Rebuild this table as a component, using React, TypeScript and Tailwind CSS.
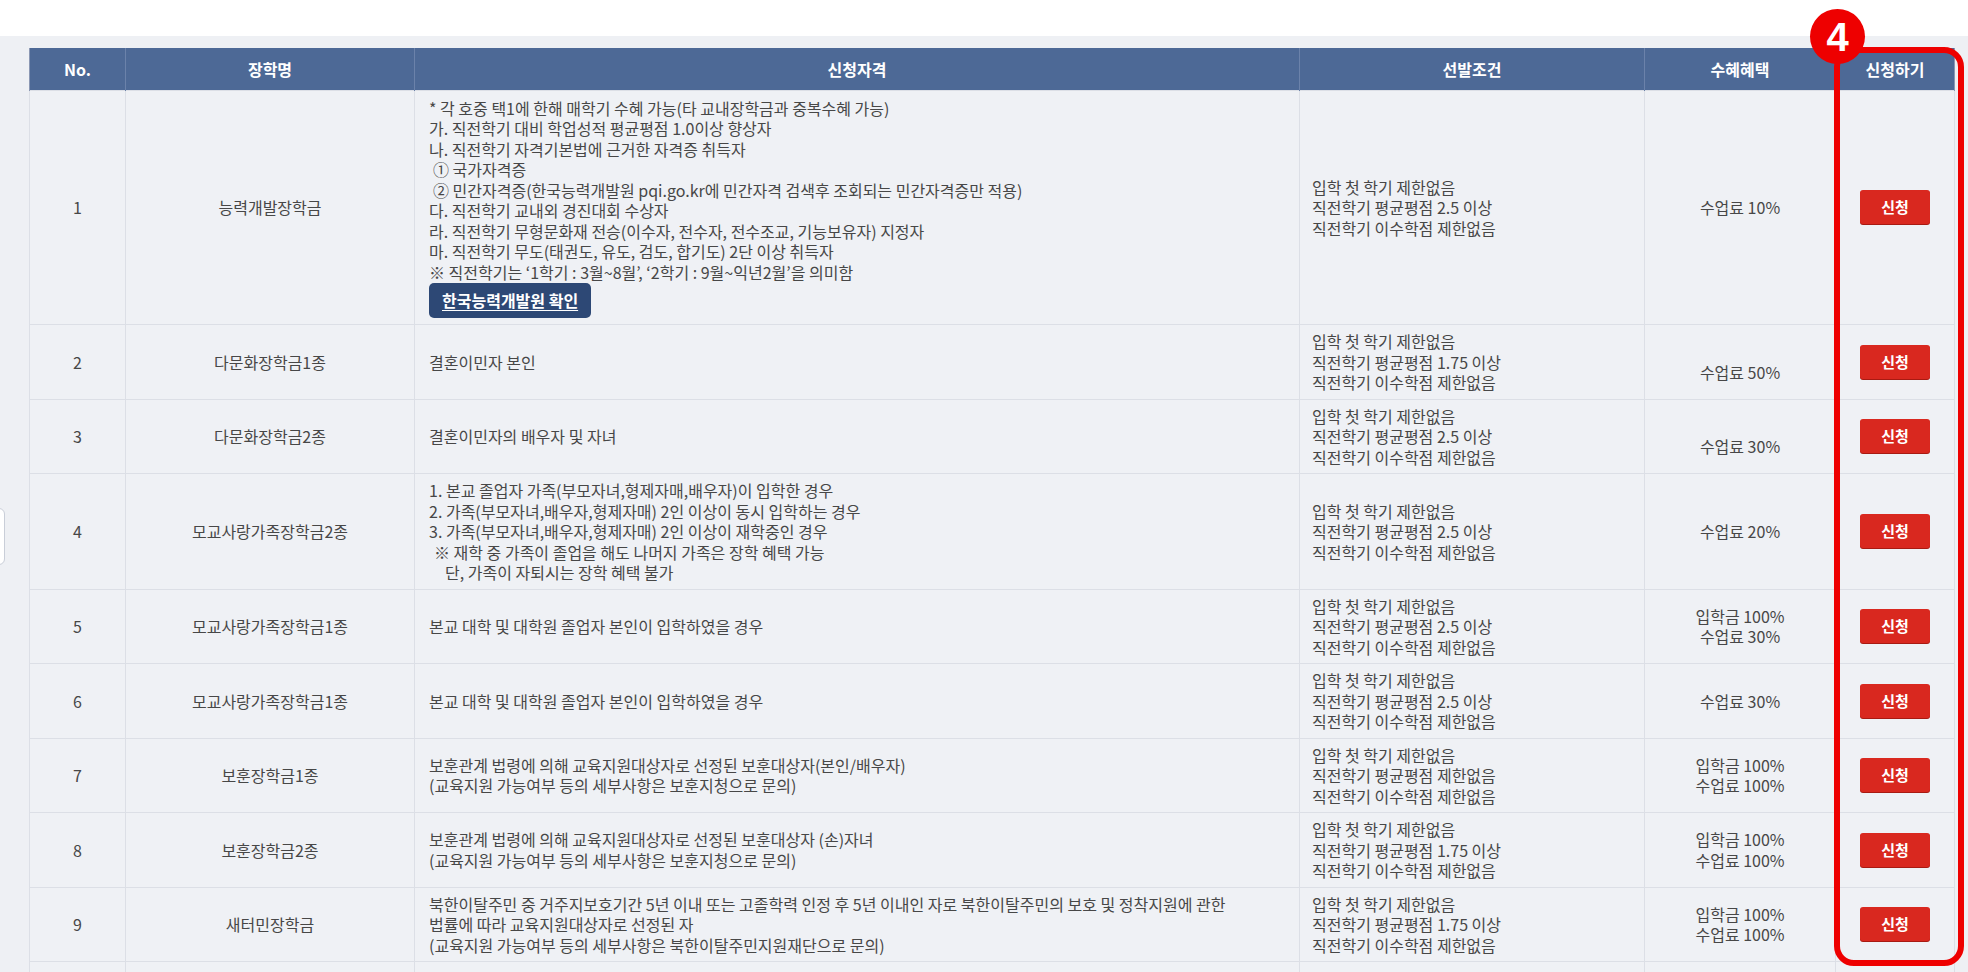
import React from "react";

type Row = {
  no: string;
  name: string;
  qual: React.ReactNode[];
  cond: string[];
  benefit: string[];
  button?: boolean;
};

const C1 = ["입학 첫 학기 제한없음", "직전학기 평균평점 2.5 이상", "직전학기 이수학점 제한없음"];
const C175 = ["입학 첫 학기 제한없음", "직전학기 평균평점 1.75 이상", "직전학기 이수학점 제한없음"];
const CNONE = ["입학 첫 학기 제한없음", "직전학기 평균평점 제한없음", "직전학기 이수학점 제한없음"];

const rows: Row[] = [
  {
    no: "1",
    name: "능력개발장학금",
    qual: [
      "* 각 호중 택1에 한해 매학기 수혜 가능(타 교내장학금과 중복수혜 가능)",
      "가. 직전학기 대비 학업성적 평균평점 1.0이상 향상자",
      "나. 직전학기 자격기본법에 근거한 자격증 취득자",
      <span className="pl-[4px]">① 국가자격증</span>,
      <span className="pl-[4px]">② 민간자격증(한국능력개발원 pqi.go.kr에 민간자격 검색후 조회되는 민간자격증만 적용)</span>,
      "다. 직전학기 교내외 경진대회 수상자",
      "라. 직전학기 무형문화재 전승(이수자, 전수자, 전수조교, 기능보유자) 지정자",
      "마. 직전학기 무도(태권도, 유도, 검도, 합기도) 2단 이상 취득자",
      "※ 직전학기는 ‘1학기 : 3월~8월’, ‘2학기 : 9월~익년2월’을 의미함",
    ],
    cond: C1,
    benefit: ["수업료 10%"],
    button: true,
  },
  { no: "2", name: "다문화장학금1종", qual: ["결혼이민자 본인"], cond: C175, benefit: ["\u00a0", "수업료 50%"] },
  { no: "3", name: "다문화장학금2종", qual: ["결혼이민자의 배우자 및 자녀"], cond: C1, benefit: ["\u00a0", "수업료 30%"] },
  {
    no: "4",
    name: "모교사랑가족장학금2종",
    qual: [
      "1. 본교 졸업자 가족(부모자녀,형제자매,배우자)이 입학한 경우",
      "2. 가족(부모자녀,배우자,형제자매) 2인 이상이 동시 입학하는 경우",
      "3. 가족(부모자녀,배우자,형제자매) 2인 이상이 재학중인 경우",
      <span className="pl-[5px]">※ 재학 중 가족이 졸업을 해도 나머지 가족은 장학 혜택 가능</span>,
      <span className="pl-[16px]">단, 가족이 자퇴시는 장학 혜택 불가</span>,
    ],
    cond: C1,
    benefit: ["수업료 20%"],
  },
  { no: "5", name: "모교사랑가족장학금1종", qual: ["본교 대학 및 대학원 졸업자 본인이 입학하였을 경우"], cond: C1, benefit: ["입학금 100%", "수업료 30%"] },
  { no: "6", name: "모교사랑가족장학금1종", qual: ["본교 대학 및 대학원 졸업자 본인이 입학하였을 경우"], cond: C1, benefit: ["수업료 30%"] },
  {
    no: "7",
    name: "보훈장학금1종",
    qual: ["보훈관계 법령에 의해 교육지원대상자로 선정된 보훈대상자(본인/배우자)", "(교육지원 가능여부 등의 세부사항은 보훈지청으로 문의)"],
    cond: CNONE,
    benefit: ["입학금 100%", "수업료 100%"],
  },
  {
    no: "8",
    name: "보훈장학금2종",
    qual: ["보훈관계 법령에 의해 교육지원대상자로 선정된 보훈대상자 (손)자녀", "(교육지원 가능여부 등의 세부사항은 보훈지청으로 문의)"],
    cond: C175,
    benefit: ["입학금 100%", "수업료 100%"],
  },
  {
    no: "9",
    name: "새터민장학금",
    qual: [
      "북한이탈주민 중 거주지보호기간 5년 이내 또는 고졸학력 인정 후 5년 이내인 자로 북한이탈주민의 보호 및 정착지원에 관한",
      "법률에 따라 교육지원대상자로 선정된 자",
      "(교육지원 가능여부 등의 세부사항은 북한이탈주민지원재단으로 문의)",
    ],
    cond: C175,
    benefit: ["입학금 100%", "수업료 100%"],
  },
];

const td = "border border-[#dcdfe6] align-middle";

export default function App() {
  return (
    <div className="relative min-h-screen bg-white font-['Noto_Sans_CJK_KR','Noto_Sans',sans-serif] text-[16px] leading-[20.5px] text-[#474747] overflow-hidden">
      <div className="h-[36px] bg-white" />
      <div className="relative bg-[#eef0f4] pl-[29px] pt-[12px] pb-[40px]">
        <table className="table-fixed border-collapse w-[1925px] border-x border-x-[#8a97b3]">
          <colgroup>
            <col className="w-[96px]" />
            <col className="w-[289px]" />
            <col className="w-[885px]" />
            <col className="w-[345px]" />
            <col className="w-[191px]" />
            <col className="w-[119px]" />
          </colgroup>
          <thead>
            <tr className="h-[42px] bg-[#4d6996] text-white font-bold">
              {["No.", "장학명", "신청자격", "선발조건", "수혜혜택", "신청하기"].map((h) => (
                <th key={h} className="border-x border-[#6b82aa] first:border-l-[#8a97b3] last:border-r-[#8a97b3] text-center align-middle font-bold">
                  {h}
                </th>
              ))}
            </tr>
          </thead>
          <tbody className="bg-[#eff1f5]">
            {rows.map((r) => (
              <tr key={r.no}>
                <td className={`${td} text-center py-[6px]`}>{r.no}</td>
                <td className={`${td} text-center py-[6px]`}>{r.name}</td>
                <td className={`${td} px-[14px] ${r.button ? "pt-[7px] pb-[6px]" : "py-[6px]"}`}>
                  <div className="flex flex-col">
                    {r.qual.map((q, i) => (
                      <div key={i} className="whitespace-nowrap">{q}</div>
                    ))}
                    {r.button && (
                      <div className="mt-[1px]">
                        <span className="inline-flex h-[35px] items-center rounded-[5px] bg-[#2d4875] px-[13px] font-bold text-white underline underline-offset-[3px]">
                          한국능력개발원 확인
                        </span>
                      </div>
                    )}
                  </div>
                </td>
                <td className={`${td} px-[12px] py-[6px]`}>
                  {r.cond.map((c) => (
                    <div key={c}>{c}</div>
                  ))}
                </td>
                <td className={`${td} text-center py-[6px]`}>
                  {r.benefit.map((b, i) => (
                    <div key={i}>{b}</div>
                  ))}
                </td>
                <td className={`${td} text-center py-[6px]`}>
                  <span className="inline-flex h-[34px] w-[70px] items-center justify-center rounded-[3px] bg-[#d9281f] text-[15px] font-bold text-white shadow-[0_1px_0_#a81a12]">
                    신청
                  </span>
                </td>
              </tr>
            ))}
            <tr>
              <td className={`${td} h-[60px]`} />
              <td className={td} />
              <td className={td} />
              <td className={td} />
              <td className={td} />
              <td className={td} />
            </tr>
          </tbody>
        </table>

        {/* annotation box */}
        <div className="pointer-events-none absolute left-[1834px] top-[11px] h-[919px] w-[130px] rounded-[20px] border-[6px] border-[#ee0000]" />
      </div>

      {/* badge */}
      <div className="absolute left-[1810px] top-[9px] flex h-[55px] w-[55px] items-center justify-center rounded-full bg-[#ee0000] font-['Liberation_Sans',sans-serif] text-[40px] font-bold leading-none text-white">
        4
      </div>

      {/* left edge tab */}
      <div className="absolute left-[-12px] top-[508px] h-[57px] w-[17px] rounded-[6px] border border-[#c9ced8] bg-white" />
    </div>
  );
}
